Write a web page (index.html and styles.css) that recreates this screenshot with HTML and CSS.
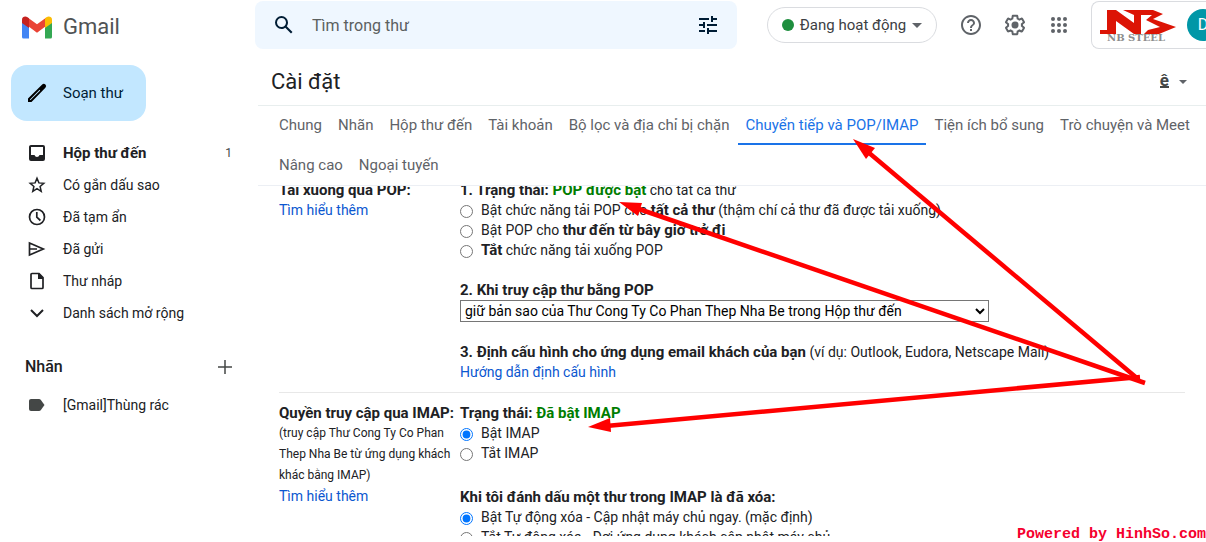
FILE: index.html
```html
<!DOCTYPE html>
<html lang="vi">
<head>
<meta charset="utf-8">
<title>Gmail - Cài đặt</title>
<link rel="stylesheet" href="styles.css">
</head>
<body>
<header class="topbar">
  <a class="brand" href="#">
    <svg width="30" height="23" viewBox="0 0 30 23" aria-hidden="true">
      <path fill="#4285f4" d="M0 6v15a1.500 1.500 0 0 0 1.500 1.500H7V11z"/>
      <path fill="#34a853" d="M23 11v11.500h5.500A1.500 1.500 0 0 0 30 21V6z"/>
      <path fill="#ea4335" d="M6 10V1.800l9 6.400 9-6.400V10l-9 6.700z"/>
      <path fill="#c5221f" d="M0 3.500V7l7 5V2.500L5.600 1.300C3.200-.5 0 1 0 3.500z"/>
      <path fill="#fbbc04" d="M23 2.500V12l7-5V3.500C30 1 26.800-.5 24.400 1.300z"/>
    </svg>
    <span>Gmail</span>
  </a>
  <form class="search" role="search">
    <button type="button" class="icon-btn" aria-label="Tìm kiếm">
      <svg width="24" height="24" viewBox="0 0 24 24"><path fill="#001d35" d="M20.490 19l-5.730-5.730C15.530 12.200 16 10.910 16 9.500A6.500 6.500 0 1 0 9.500 16c1.410 0 2.700-.47 3.770-1.240L19 20.490 20.490 19zM5 9.500C5 7.010 7.010 5 9.500 5S14 7.010 14 9.500 11.990 14 9.500 14 5 11.990 5 9.500z"/></svg>
    </button>
    <input type="text" aria-label="Tìm trong thư" placeholder="Tìm trong thư">
    <button type="button" class="icon-btn" aria-label="Bộ lọc tìm kiếm">
      <svg width="24" height="24" viewBox="0 0 24 24"><path fill="#001d35" d="M3 17v2h6v-2H3zM3 5v2h10V5H3zm10 16v-2h8v-2h-8v-2h-2v6h2zM7 9v2H3v2h4v2h2V9H7zm14 4v-2H11v2h10zm-6-4h2V7h4V5h-4V3h-2v6z"/></svg>
    </button>
  </form>
  <button type="button" class="status"><i class="dot"></i>Đang hoạt động<i class="caret"></i></button>
  <nav class="tools">
    <button type="button" class="icon-btn" aria-label="Trợ giúp">
      <svg width="24" height="24" viewBox="0 0 24 24"><path fill="#5f6368" d="M11 18h2v-2h-2v2zm1-16C6.480 2 2 6.480 2 12s4.480 10 10 10 10-4.480 10-10S17.520 2 12 2zm0 18c-4.410 0-8-3.590-8-8s3.590-8 8-8 8 3.590 8 8-3.590 8-8 8zm0-14c-2.210 0-4 1.790-4 4h2c0-1.100.9-2 2-2s2 .9 2 2c0 2-3 1.750-3 5h2c0-2.250 3-2.500 3-5 0-2.210-1.790-4-4-4z"/></svg>
    </button>
    <button type="button" class="icon-btn" aria-label="Cài đặt">
      <svg width="24" height="24" viewBox="0 0 24 24"><path fill="#5f6368" d="M13.850 22.250h-3.700c-.74 0-1.360-.54-1.450-1.270l-.27-1.890c-.27-.14-.53-.29-.79-.46l-1.800.72c-.7.260-1.470-.03-1.810-.65L2.200 15.530c-.35-.66-.2-1.440.36-1.880l1.530-1.190c-.01-.15-.02-.3-.02-.46 0-.15.010-.31.020-.46l-1.520-1.190c-.59-.45-.74-1.260-.37-1.880l1.850-3.190c.34-.62 1.110-.9 1.790-.63l1.810.73c.26-.17.520-.32.780-.46l.27-1.910c.09-.7.710-1.250 1.440-1.250h3.700c.74 0 1.360.54 1.450 1.270l.27 1.890c.27.140.530.290.790.460l1.800-.72c.71-.26 1.480.03 1.820.65l1.840 3.180c.36.660.200 1.440-.36 1.880l-1.520 1.190c.01.150.020.300.020.460s-.01.310-.02.460l1.520 1.190c.56.450.720 1.230.370 1.860l-1.860 3.220c-.34.620-1.110.9-1.800.63l-1.800-.72c-.26.170-.52.320-.78.460l-.27 1.910c-.1.680-.72 1.220-1.460 1.220zm-3.230-2h2.760l.37-2.550.53-.22c.44-.18.880-.44 1.340-.78l.45-.34 2.380.96 1.380-2.400-2.030-1.580.07-.56c.03-.26.060-.51.060-.78s-.03-.53-.06-.78l-.07-.56 2.030-1.580-1.390-2.400-2.390.96-.45-.35c-.42-.32-.87-.58-1.330-.77l-.52-.22-.37-2.550h-2.760l-.37 2.550-.53.210c-.44.190-.88.440-1.340.79l-.45.330-2.380-.95-1.390 2.390 2.030 1.580-.07.560a7 7 0 0 0-.06.790c0 .260.020.530.060.780l.07.560-2.030 1.580 1.380 2.400 2.390-.96.450.35c.43.330.860.580 1.330.770l.53.220z"/><circle cx="12" cy="12" r="3.500" fill="#5f6368"/></svg>
    </button>
    <button type="button" class="icon-btn" aria-label="Ứng dụng Google">
      <svg width="24" height="24" viewBox="0 0 24 24" fill="#5f6368"><circle cx="6" cy="6" r="2"/><circle cx="12" cy="6" r="2"/><circle cx="18" cy="6" r="2"/><circle cx="6" cy="12" r="2"/><circle cx="12" cy="12" r="2"/><circle cx="18" cy="12" r="2"/><circle cx="6" cy="18" r="2"/><circle cx="12" cy="18" r="2"/><circle cx="18" cy="18" r="2"/></svg>
    </button>
  </nav>
  <button type="button" class="account" aria-label="Tài khoản NB Steel">
    <svg width="80" height="34" viewBox="0 0 80 34" aria-hidden="true">
      <g fill="#dc1405">
        <path d="M8 2h9l18 13v11L17 13v13H1v-4h7z"/>
        <path d="M24 2h30l10 4-10 5 23 8-17 7H45l4-4 12-3-14-7 6-5H42v19h-7V7z"/>
      </g>
      <text x="8" y="33" class="logo-text">NB STEEL</text>
    </svg>
    <span class="avatar">D</span>
  </button>
</header>

<div class="layout">
  <aside class="sidebar">
    <button type="button" class="compose">
      <svg width="24" height="24" viewBox="0 0 24 24"><path fill="#000" fill-rule="evenodd" d="M20.400 3.600a2.300 2.300 0 0 0-3.200 0L3 17.500V21h3.500L20.400 6.800a2.300 2.300 0 0 0 0-3.200zM5.600 19H5v-.6L14.600 8.800l.6.600z"/></svg>
      Soạn thư
    </button>
    <nav class="folders">
      <a class="folder current" href="#"><svg width="20" height="20" viewBox="0 0 20 20"><path fill="#202124" fill-rule="evenodd" d="M4 2h12a2 2 0 0 1 2 2v12a2 2 0 0 1-2 2H4a2 2 0 0 1-2-2V4c0-1.100.9-2 2-2zm0 2v8h3.500c.5 1.200 1.300 2 2.500 2s2-.8 2.500-2H16V4z"/></svg><span>Hộp thư đến</span><span class="count">1</span></a>
      <a class="folder" href="#"><svg width="20" height="20" viewBox="0 0 20 20"><path fill="none" stroke="#202124" stroke-width="1.500" d="M10 3.300l1.900 4.600 4.900.4-3.700 3.200 1.100 4.800-4.200-2.600-4.200 2.600 1.100-4.800-3.700-3.200 4.900-.4z"/></svg><span>Có gắn dấu sao</span></a>
      <a class="folder" href="#"><svg width="20" height="20" viewBox="0 0 20 20" fill="none" stroke="#202124" stroke-width="1.700"><circle cx="10" cy="10" r="7.500"/><path d="M9.800 5v5.200l3.600 3.300"/></svg><span>Đã tạm ẩn</span></a>
      <a class="folder" href="#"><svg width="20" height="20" viewBox="0 0 20 20" fill="none" stroke="#202124" stroke-width="1.700"><path d="M2.500 4l13.800 6-13.800 6zM2.500 10H10"/></svg><span>Đã gửi</span></a>
      <a class="folder" href="#"><svg width="20" height="20" viewBox="0 0 20 20"><path fill="none" stroke="#202124" stroke-width="1.700" d="M5.500 2.500H12l4 4v10a1 1 0 0 1-1 1H5a1 1 0 0 1-1-1v-13a1 1 0 0 1 1-1z"/><path fill="#202124" d="M11 2v6h5V6.500L12 2z"/></svg><span>Thư nháp</span></a>
      <a class="folder" href="#"><svg width="20" height="20" viewBox="0 0 20 20"><path fill="none" stroke="#202124" stroke-width="2" d="M4 7l6 6 6-6"/></svg><span>Danh sách mở rộng</span></a>
    </nav>
    <div class="labels-head">
      <h2>Nhãn</h2>
      <button type="button" class="icon-btn" aria-label="Tạo nhãn mới"><svg width="20" height="20" viewBox="0 0 20 20"><path stroke="#444746" stroke-width="1.500" d="M10 3v14M3 10h14"/></svg></button>
    </div>
    <a class="folder" href="#"><svg width="20" height="20" viewBox="0 0 20 20"><path fill="#444746" d="M4 4h8c.8 0 1.300.3 1.700.8L17.500 10l-3.800 5.200c-.4.500-.9.800-1.700.8H4a2 2 0 0 1-2-2V6c0-1.100.9-2 2-2z"/></svg><span>[Gmail]Thùng rác</span></a>
  </aside>

  <main class="settings">
    <div class="title-row">
      <h1>Cài đặt</h1>
      <button type="button" class="input-tool" aria-label="Công cụ nhập liệu"><span>ê</span><i class="caret small"></i></button>
    </div>
    <nav class="tabs">
      <a href="#">Chung</a>
      <a href="#">Nhãn</a>
      <a href="#">Hộp thư đến</a>
      <a href="#">Tài khoản</a>
      <a href="#">Bộ lọc và địa chỉ bị chặn</a>
      <a href="#" class="active">Chuyển tiếp và POP/IMAP</a>
      <a href="#">Tiện ích bổ sung</a>
      <a href="#">Trò chuyện và Meet</a>
      <a href="#">Nâng cao</a>
      <a href="#">Ngoại tuyến</a>
    </nav>
    <div class="scroller">
      <section class="row first">
        <div class="side">
          <b>Tải xuống qua POP:</b>
          <a href="#">Tìm hiểu thêm</a>
        </div>
        <div class="detail">
          <div class="group">
            <p><b>1. Trạng thái: <span class="on">POP được bật</span></b> cho tất cả thư</p>
            <label><input type="radio" name="pop"><span>Bật chức năng tải POP cho <b>tất cả thư</b> (thậm chí cả thư đã được tải xuống)</span></label>
            <label><input type="radio" name="pop"><span>Bật POP cho <b>thư đến từ bây giờ trở đi</b></span></label>
            <label><input type="radio" name="pop"><span><b>Tắt</b> chức năng tải xuống POP</span></label>
          </div>
          <div class="group">
            <label class="heading" for="pop-action">2. Khi truy cập thư bằng POP</label>
            <select id="pop-action"><option>giữ bản sao của Thư Cong Ty Co Phan Thep Nha Be trong Hộp thư đến</option></select>
          </div>
          <div class="group">
            <p><b>3. Định cấu hình cho ứng dụng email khách của bạn</b> (ví dụ: Outlook, Eudora, Netscape Mail)</p>
            <a href="#">Hướng dẫn định cấu hình</a>
          </div>
        </div>
      </section>
      <section class="row">
        <div class="side">
          <b>Quyền truy cập qua IMAP:</b>
          <small>(truy cập Thư Cong Ty Co Phan Thep Nha Be từ ứng dụng khách khác bằng IMAP)</small>
          <a href="#">Tìm hiểu thêm</a>
        </div>
        <div class="detail imap">
          <div class="group">
            <p><b>Trạng thái: <span class="on">Đã bật IMAP</span></b></p>
            <label><input type="radio" name="imap" checked><span>Bật IMAP</span></label>
            <label><input type="radio" name="imap"><span>Tắt IMAP</span></label>
          </div>
          <div class="group">
            <p><b>Khi tôi đánh dấu một thư trong IMAP là đã xóa:</b></p>
            <label><input type="radio" name="expunge" checked><span>Bật Tự động xóa - Cập nhật máy chủ ngay. (mặc định)</span></label>
            <label><input type="radio" name="expunge"><span>Tắt Tự động xóa - Đợi ứng dụng khách cập nhật máy chủ.</span></label>
          </div>
        </div>
      </section>
    </div>
  </main>
</div>

<svg class="arrows" width="1206" height="542" viewBox="0 0 1206 542" aria-hidden="true">
  <g stroke="#f00" stroke-width="4.500">
    <path d="M868 152L1138 379"/>
    <path d="M636 208L1145 383"/>
    <path d="M606 426L1140 377"/>
  </g>
  <g fill="#f00">
    <path d="M853 139l22 9-9 11z"/>
    <path d="M619 202l23 1-4 13z"/>
    <path d="M588 427l22-9 1 14z"/>
  </g>
</svg>
<div class="watermark">Powered by HinhSo.com</div>
</body>
</html>
```

FILE: styles.css
```css
* { box-sizing: border-box; }

body {
  margin: 0;
  height: 100vh;
  display: flex;
  flex-direction: column;
  overflow: hidden;
  position: relative;
  background: #fff;
  color: #202124;
  font: 14px/20px Roboto, "Noto Sans", sans-serif;
}

button, input, select { font: inherit; color: inherit; }
button { border: 0; padding: 0; background: none; }
a { color: #0b57d0; text-decoration: none; }
h1, h2, p { margin: 0; font-weight: 400; }
svg { display: block; flex: none; }

.topbar {
  flex: none;
  display: flex;
  align-items: center;
  height: 50px;
}

.brand {
  width: 255px;
  flex: none;
  display: flex;
  align-items: center;
  gap: 11px;
  padding: 4px 0 0 22px;
  color: #505355;
  font-size: 22px;
  line-height: 28px;
}

.search {
  flex: 1;
  display: flex;
  align-items: center;
  height: 48px;
  padding: 0 17px;
  border-radius: 8px;
  background: #eff7ff;
}

.search input {
  flex: 1;
  min-width: 0;
  padding: 2px 16px 0;
  border: 0;
  background: none;
  outline: 0;
  font-size: 16px;
}

.search input::placeholder { color: #5b605f; opacity: 1; }

.status {
  display: flex;
  align-items: center;
  justify-content: center;
  gap: 6px;
  width: 170px;
  height: 36px;
  margin: 0 20px 0 30px;
  border: 1px solid #dadce0;
  border-radius: 18px;
  color: #3c4043;
  font-size: 15px;
}

.dot {
  width: 12px;
  height: 12px;
  border-radius: 50%;
  background: #1e8e3e;
}

.caret {
  border: 5px solid transparent;
  border-top-color: #5f6368;
  border-bottom: 0;
}

.caret.small { border-width: 4px; border-bottom: 0; }

.tools { display: flex; gap: 20px; padding-left: 2px; }

.account {
  display: flex;
  align-items: center;
  gap: 8px;
  width: 115px;
  height: 48px;
  margin-left: 20px;
  padding-left: 7px;
  overflow: hidden;
  border: 1px solid #dadce0;
  border-right: 0;
  border-radius: 8px 0 0 8px;
}

.logo-text { font: bold 10px "DejaVu Serif", serif; fill: #8c8c8c; }

.avatar {
  flex: none;
  width: 32px;
  border-radius: 50%;
  background: #0097a7;
  color: #fff;
  font-size: 16px;
  line-height: 32px;
}

.layout { flex: 1; min-height: 0; display: flex; margin-bottom: 6px; }

.sidebar { width: 255px; flex: none; padding-top: 15px; }

.compose {
  display: flex;
  align-items: center;
  gap: 14px;
  height: 56px;
  margin: 0 0 16px 11px;
  padding: 0 23px 0 14px;
  border-radius: 16px;
  background: #c2e7ff;
  color: #001d35;
  font-size: 15px;
}

.folder {
  display: flex;
  align-items: center;
  gap: 16px;
  height: 32px;
  padding: 0 23px 0 27px;
  color: #202124;
}

.current { font-size: 15px; font-weight: 700; }
.count { margin-left: auto; font-size: 12px; font-weight: 400; color: #444746; }

.labels-head {
  display: flex;
  align-items: center;
  justify-content: space-between;
  height: 40px;
  margin: 18px 0 2px;
  padding: 0 20px 0 25px;
}

.labels-head h2 { font-size: 16px; font-weight: 500; }

.settings {
  flex: 1;
  min-width: 0;
  display: flex;
  flex-direction: column;
  padding-left: 3px;
}

.title-row {
  flex: none;
  display: flex;
  align-items: center;
  justify-content: space-between;
  height: 56px;
  padding: 8px 19px 0 13px;
  border-bottom: 1px solid #e8eeee;
}

h1 { font-size: 22px; line-height: 28px; }

.input-tool { display: flex; align-items: center; gap: 10px; }
.input-tool span {
  border-bottom: 2px solid #444746;
  color: #444746;
  font-size: 17px;
  font-weight: 700;
  line-height: 11px;
}

.tabs {
  flex: none;
  display: flex;
  flex-wrap: wrap;
  row-gap: 1px;
  padding-left: 13px;
  border-bottom: 1px solid #eceff4;
}

.tabs a {
  padding: 9px 8px 8px;
  border-bottom: 2px solid transparent;
  color: #5f6368;
  font-size: 15px;
  white-space: nowrap;
}

.tabs .active { border-color: #1a73e8; color: #1a73e8; }

.scroller { flex: 1; min-height: 0; overflow: hidden; padding: 0 21px; }

.row { display: flex; padding: 10px 0; border-top: 1px solid #e8e8e8; }
.row.first { margin-top: -17px; }
.row b { font-size: 15px; }

.side { width: 181px; flex: none; display: flex; flex-direction: column; }
.side b { white-space: nowrap; }
.side small { font-size: 12px; line-height: 21px; }

.detail { flex: 1; display: flex; flex-direction: column; gap: 20px; }
.imap { gap: 24px; }
.group { display: flex; flex-direction: column; align-items: flex-start; }
.group label { display: flex; align-items: center; gap: 8px; white-space: nowrap; }
.group .heading { font-size: 15px; font-weight: 700; }
.on { color: #007d00; }

input[type="radio"] { width: 13px; height: 13px; margin: 2px 0 0; accent-color: #0075ff; }

select {
  width: 529px;
  max-width: 100%;
  height: 22px;
  border: 1px solid #767676;
  border-radius: 0;
  background: #fff;
  color: #000;
}

.arrows { position: absolute; left: 0; top: 0; pointer-events: none; }

.watermark {
  position: absolute;
  right: 0;
  bottom: 0;
  color: #f5002d;
  font: bold 15px/14px "Liberation Mono", monospace;
}
```
